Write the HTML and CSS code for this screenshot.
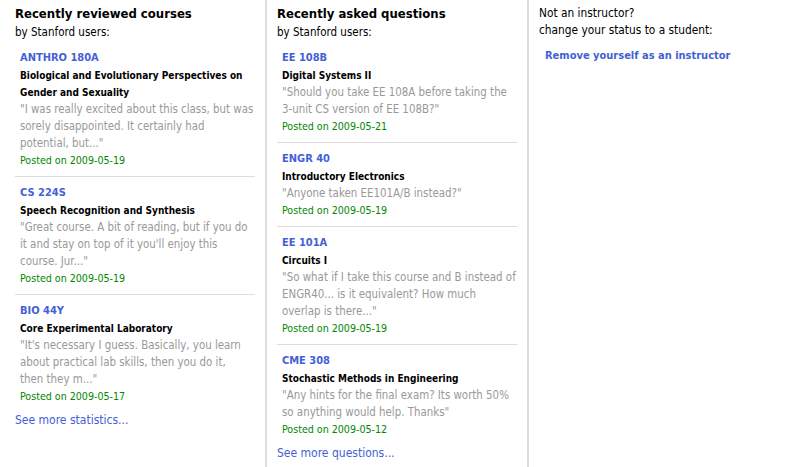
FILE: index.html
```html
<!DOCTYPE html>
<html lang="en">
<head>
  <meta charset="UTF-8">
  <title>Dashboard</title>
  <link rel="stylesheet" href="styles.css">
</head>
<body>
  <div class="columns">
    <div class="col">
      <h2>Recently reviewed courses</h2>
      <div class="sub">by Stanford users:</div>
      <ul class="items">
        <li>
          <a class="code" href="#">ANTHRO 180A</a>
          <div class="title">Biological and Evolutionary Perspectives on Gender and Sexuality</div>
          <div class="quote">"I was really excited about this class, but was sorely disappointed. It certainly had potential, but..."</div>
          <div class="posted">Posted on 2009-05-19</div>
        </li>
        <li>
          <a class="code" href="#">CS 224S</a>
          <div class="title">Speech Recognition and Synthesis</div>
          <div class="quote">"Great course. A bit of reading, but if you do it and stay on top of it you'll enjoy this course. Jur..."</div>
          <div class="posted">Posted on 2009-05-19</div>
        </li>
        <li>
          <a class="code" href="#">BIO 44Y</a>
          <div class="title">Core Experimental Laboratory</div>
          <div class="quote">"It's necessary I guess. Basically, you learn about practical lab skills, then you do it,<br>then they m..."</div>
          <div class="posted">Posted on 2009-05-17</div>
        </li>
      </ul>
      <a class="more" href="#">See more statistics...</a>
    </div>
    <div class="col">
      <h2>Recently asked questions</h2>
      <div class="sub">by Stanford users:</div>
      <ul class="items">
        <li>
          <a class="code" href="#">EE 108B</a>
          <div class="title">Digital Systems II</div>
          <div class="quote">"Should you take EE 108A before taking the 3-unit CS version of EE 108B?"</div>
          <div class="posted">Posted on 2009-05-21</div>
        </li>
        <li>
          <a class="code" href="#">ENGR 40</a>
          <div class="title">Introductory Electronics</div>
          <div class="quote">"Anyone taken EE101A/B instead?"</div>
          <div class="posted">Posted on 2009-05-19</div>
        </li>
        <li>
          <a class="code" href="#">EE 101A</a>
          <div class="title">Circuits I</div>
          <div class="quote">"So what if I take this course and B instead of ENGR40... is it equivalent? How much overlap is there..."</div>
          <div class="posted">Posted on 2009-05-19</div>
        </li>
        <li>
          <a class="code" href="#">CME 308</a>
          <div class="title">Stochastic Methods in Engineering</div>
          <div class="quote">"Any hints for the final exam? Its worth 50% so anything would help. Thanks"</div>
          <div class="posted">Posted on 2009-05-12</div>
        </li>
      </ul>
      <a class="more" href="#">See more questions...</a>
    </div>
    <div class="col last">
      <div class="note">Not an instructor?<br>change your status to a student:</div>
      <a class="remove" href="#">Remove yourself as an instructor</a>
    </div>
  </div>
</body>
</html>
```

FILE: styles.css
```css
html, body {margin: 0; padding: 0; background: #fff; font-family: "DejaVu Sans Condensed", "DejaVu Sans", sans-serif; color: #000;}
a {text-decoration: none; color: #4361d6;}
.columns {display: flex; align-items: stretch; min-height: 100vh; padding-left: 5px;}
.col {width: 240px; padding: 0 10px; border-right: 2px solid #ddd;}
.col.last {border-right: none; flex: 1; padding-top: 5px;}
h2 {margin: 0; padding-top: 5px; font-size: 13px; line-height: 18px; font-weight: bold;}
.sub {font-size: 11.5px; line-height: 18px;}
.items {list-style: none; margin: 1px 0 0; padding: 0;}
.items li {padding: 7px 0 8px 5px; border-bottom: 1px solid #ddd;}
.items li:last-child {border-bottom: none;}
.code {display: block; font-size: 11px; font-weight: bold; line-height: 18px;}
.title {font-size: 10px; font-weight: bold; line-height: 17px;}
.quote {font-size: 11.4px; color: #999; line-height: 17px;}
.posted {font-size: 10.6px; color: #080; line-height: 16px;}
.more {display: block; font-size: 12px; line-height: 16px;}
.note {font-size: 11.8px; line-height: 17px;}
.remove {display: block; margin: 9px 0 0 6px; font-size: 11px; font-weight: bold; line-height: 16px;}
```
